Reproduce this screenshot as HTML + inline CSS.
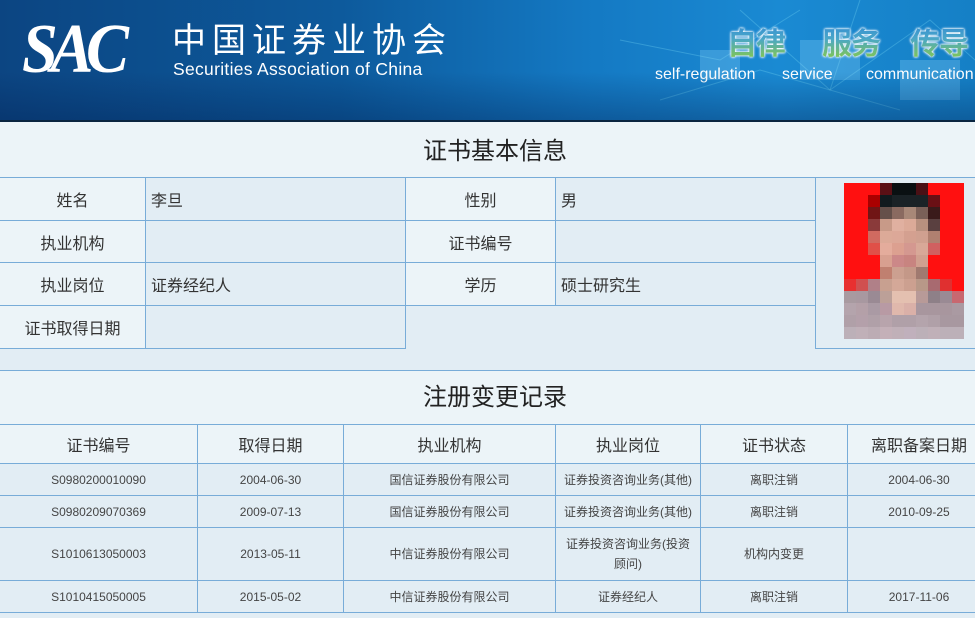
<!DOCTYPE html>
<html><head><meta charset="utf-8"><style>
*{margin:0;padding:0;box-sizing:border-box}
body{width:975px;height:618px;overflow:hidden;background:#e2edf4;font-family:"Liberation Sans","Noto Sans CJK SC",sans-serif;position:relative;color:#333}
.hdr{position:absolute;left:0;top:0;width:975px;height:120px;background:linear-gradient(90deg,#0c4582 0%,#0d5a9c 35%,#1479c3 60%,#1a8ad3 80%,#1580c6 100%);overflow:hidden}
.hdr:after{content:"";position:absolute;left:0;top:0;right:0;bottom:0;background:linear-gradient(180deg,rgba(0,0,0,0) 60%,rgba(0,30,80,.35) 100%)}
.line1{position:absolute;left:0;top:120px;width:975px;height:2px;background:#0a2540}
.abs{position:absolute}
.c{position:absolute;border:1px solid #78acd8;display:flex;align-items:center;justify-content:center;font-size:16px;color:#333}
.l{background:#ecf4f8}
.v{background:#e2edf4;justify-content:flex-start;padding-left:5px}
.s{font-size:12px;color:#444;text-align:center;line-height:20px}
.g{background:linear-gradient(180deg,#2f86d6 0%,#4aa7c8 45%,#8ccc3c 100%);-webkit-background-clip:text;background-clip:text;color:transparent;filter:drop-shadow(0 0 1px #fff) drop-shadow(0 0 1px #fff);font-size:30px;font-family:"Noto Sans CJK SC",sans-serif;font-weight:bold;letter-spacing:-1px}
.en{color:#fff;font-size:16px;font-family:"Liberation Sans",sans-serif}
.px{position:absolute;width:12px;height:12px}
</style></head><body>
<div class="hdr">
 <svg class="abs" style="left:600px;top:0" width="375" height="120"><g stroke="#6fd0f0" stroke-opacity=".35" fill="none"><path d="M140 10 L230 90 L330 20 L375 60"/><path d="M20 40 L120 60 L200 10"/><path d="M60 100 L160 70 L300 110"/><path d="M230 90 L260 0"/></g><g fill="#9fe0ff" fill-opacity=".25"><rect x="200" y="40" width="60" height="40"/><rect x="100" y="50" width="40" height="30"/><rect x="300" y="60" width="60" height="40"/></g></svg>
 <div class="abs" style="left:22px;top:14px;color:#fff;font-family:'Liberation Serif',serif;font-style:italic;font-weight:bold;font-size:70px;letter-spacing:-8px;line-height:72px;transform:scaleX(.92);transform-origin:0 0">SAC</div>
 <div class="abs" style="left:172px;top:18px;color:#fff;font-size:34px;letter-spacing:6px;line-height:40px;font-family:'Noto Sans CJK SC',sans-serif">中国证券业协会</div>
 <div class="abs" style="left:173px;top:58px;color:#fff;font-size:17.5px;line-height:22px;letter-spacing:.3px">Securities Association of China</div>
 <div class="abs g" style="left:727px;top:20px;line-height:42px">自律</div>
 <div class="abs g" style="left:822px;top:20px;line-height:42px">服务</div>
 <div class="abs g" style="left:910px;top:20px;line-height:42px">传导</div>
 <div class="abs en" style="left:655px;top:66px">self-regulation</div>
 <div class="abs en" style="left:782px;top:66px">service</div>
 <div class="abs en" style="left:866px;top:66px">communication</div>
</div>
<div class="line1"></div>
<div class="abs" style="left:0;top:122px;width:975px;height:55px;background:#ecf4f8"></div>
<div class="abs" style="left:0;top:135px;width:990px;text-align:center;font-size:24px;color:#222;line-height:34px">证书基本信息</div>

<div class="c l" style="left:-1px;top:177px;width:147px;height:44px">姓名</div>
<div class="c v" style="left:145px;top:177px;width:261px;height:44px">李旦</div>
<div class="c l" style="left:405px;top:177px;width:151px;height:44px">性别</div>
<div class="c v" style="left:555px;top:177px;width:261px;height:44px">男</div>
<div class="c l" style="left:-1px;top:220px;width:147px;height:43px">执业机构</div>
<div class="c v" style="left:145px;top:220px;width:261px;height:43px"></div>
<div class="c l" style="left:405px;top:220px;width:151px;height:43px">证书编号</div>
<div class="c v" style="left:555px;top:220px;width:261px;height:43px"></div>
<div class="c l" style="left:-1px;top:262px;width:147px;height:44px">执业岗位</div>
<div class="c v" style="left:145px;top:262px;width:261px;height:44px">证券经纪人</div>
<div class="c l" style="left:405px;top:262px;width:151px;height:44px">学历</div>
<div class="c v" style="left:555px;top:262px;width:261px;height:44px">硕士研究生</div>
<div class="c l" style="left:-1px;top:305px;width:147px;height:44px">证书取得日期</div>
<div class="c v" style="left:145px;top:305px;width:261px;height:44px"></div>
<div class="c v" style="left:815px;top:177px;width:170px;height:172px;border-right:none"></div>

<div id="ph" class="abs" style="left:844px;top:183px;width:120px;height:156px"></div>

<div class="abs" style="left:0;top:370px;width:975px;height:55px;background:#ecf4f8;border-top:1px solid #78acd8"></div>
<div class="abs" style="left:0;top:381px;width:990px;text-align:center;font-size:24px;color:#222;line-height:34px">注册变更记录</div>

<div id="t2"></div>
<script>
var cols=[-1,197,343,555,700,847,990];
var rows=[424,463,495,527,580,612];
var data=[["证书编号","取得日期","执业机构","执业岗位","证书状态","离职备案日期"],
["S0980200010090","2004-06-30","国信证券股份有限公司","证券投资咨询业务(其他)","离职注销","2004-06-30"],
["S0980209070369","2009-07-13","国信证券股份有限公司","证券投资咨询业务(其他)","离职注销","2010-09-25"],
["S1010613050003","2013-05-11","中信证券股份有限公司","证券投资咨询业务(投资<br>顾问)","机构内变更",""],
["S1010415050005","2015-05-02","中信证券股份有限公司","证券经纪人","离职注销","2017-11-06"]];
var h="";
for(var r=0;r<5;r++)for(var c=0;c<6;c++){
h+='<div class="c '+(r==0?'l':'s')+'" style="left:'+cols[c]+'px;top:'+rows[r]+'px;width:'+(cols[c+1]-cols[c]+1)+'px;height:'+(rows[r+1]-rows[r]+1)+'px;'+(r?'background:#e2edf4':'')+'">'+data[r][c]+'</div>';}
document.getElementById('t2').innerHTML=h;
var R="#ff1010",P=[
[R,R,R,"#5a1015","#0a1012","#0a1012","#4a1015",R,R,R],
[R,R,"#a00",  "#111a1e","#1a2226","#1a2226","#1a2226","#6a1015",R,R],
[R,R,"#701515","#65504a","#8a6a60","#a88878","#7a6058","#3a1a1a",R,R],
[R,R,"#8a3a3a","#c89a88","#e0b0a0","#dcaa98","#b8907f","#5a4040",R,R],
[R,R,"#d06a60","#dcaa98","#dca898","#d4a090","#d0a090","#b08070",R,R],
[R,R,"#e05048","#e4ac9c","#dca090","#d49890","#d8a898","#d06060",R,R],
[R,R,R,"#d8a090","#cc8888","#c88480","#d0a090",R,R,R],
[R,R,R,"#c08070","#cca090","#c49888","#a07a70",R,R,R],
["#e83030","#d05050","#b08088","#c8a090","#d4a898","#cca090","#b89888","#a86a70","#e03030",R],
["#a89aa0","#a898a0","#9a8a94","#bca098","#e4c0b0","#e4c0b0","#b89a98","#8e8088","#9a8a94","#c86870"],
["#b4a4ac","#b4a0a8","#aa9aa4","#b89aa4","#e0b8ac","#dab0a8","#a8969e","#a8969e","#a8969e","#aa9aa2"],
["#b0a0a8","#b4a0aa","#b0a0a8","#b8a4ac","#b0a0a8","#b0a0a8","#b4a4ac","#b0a0a8","#a898a0","#a898a0"],
["#bcb0b8","#c0b0b8","#bcacb4","#c4b0b8","#c0b0b8","#c0b0bc","#bcb0b8","#c0b0b8","#bcb0b8","#bcb0b8"]];
var q="";for(var i=0;i<13;i++)for(var j=0;j<10;j++)q+='<div class="px" style="left:'+(j*12)+'px;top:'+(i*12)+'px;background:'+P[i][j]+'"></div>';
document.getElementById('ph').innerHTML=q;
</script>
</body></html>
